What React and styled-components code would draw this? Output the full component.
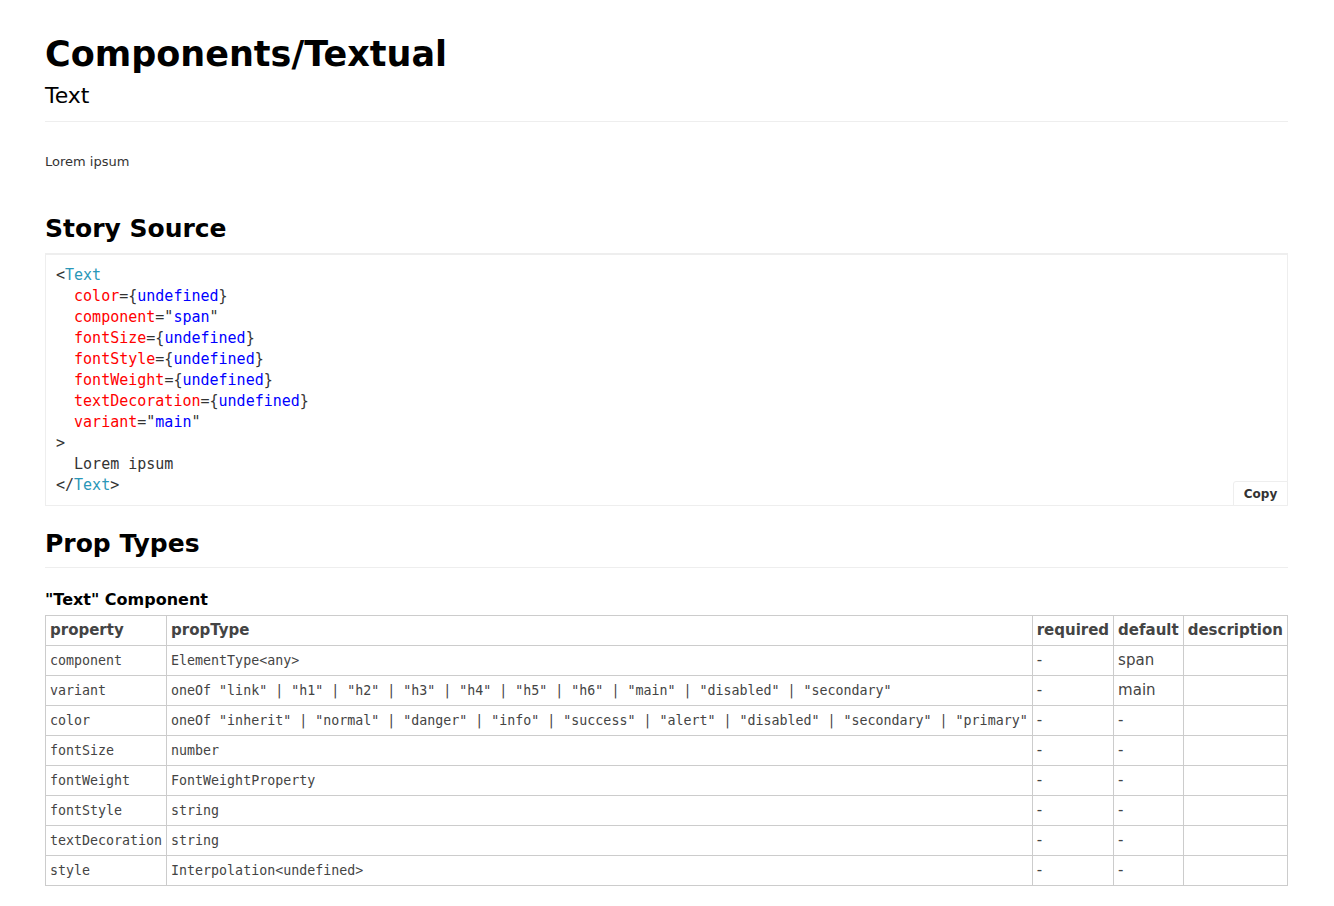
import React from 'react';
import styled, { createGlobalStyle } from 'styled-components';

const GlobalStyle = createGlobalStyle`
    html, body {
        margin: 0;
        padding: 0;
        background: #fff;
    }
    body {
        font-family: "DejaVu Sans", "Noto Sans", sans-serif;
        color: #333;
    }
`;

// one line of the story source, split into coloured tokens
const SOURCE = [
    [['p', '<'], ['tag', 'Text']],
    [['p', '  '], ['attr', 'color'], ['p', '={'], ['val', 'undefined'], ['p', '}']],
    [['p', '  '], ['attr', 'component'], ['p', '="'], ['val', 'span'], ['p', '"']],
    [['p', '  '], ['attr', 'fontSize'], ['p', '={'], ['val', 'undefined'], ['p', '}']],
    [['p', '  '], ['attr', 'fontStyle'], ['p', '={'], ['val', 'undefined'], ['p', '}']],
    [['p', '  '], ['attr', 'fontWeight'], ['p', '={'], ['val', 'undefined'], ['p', '}']],
    [['p', '  '], ['attr', 'textDecoration'], ['p', '={'], ['val', 'undefined'], ['p', '}']],
    [['p', '  '], ['attr', 'variant'], ['p', '="'], ['val', 'main'], ['p', '"']],
    [['p', '>']],
    [['p', '  Lorem ipsum']],
    [['p', '</'], ['tag', 'Text'], ['p', '>']],
];

const PROPS = [
    { name: 'component', type: 'ElementType<any>', def: 'span' },
    { name: 'variant', type: 'oneOf "link" | "h1" | "h2" | "h3" | "h4" | "h5" | "h6" | "main" | "disabled" | "secondary"', def: 'main' },
    { name: 'color', type: 'oneOf "inherit" | "normal" | "danger" | "info" | "success" | "alert" | "disabled" | "secondary" | "primary"', def: '-' },
    { name: 'fontSize', type: 'number', def: '-' },
    { name: 'fontWeight', type: 'FontWeightProperty', def: '-' },
    { name: 'fontStyle', type: 'string', def: '-' },
    { name: 'textDecoration', type: 'string', def: '-' },
    { name: 'style', type: 'Interpolation<undefined>', def: '-' },
];

export default function App() {
    return (
        <Page>
            <GlobalStyle />
            <Header>
                <Title>Components/Textual</Title>
                <Subtitle>Text</Subtitle>
            </Header>
            <Story>Lorem ipsum</Story>

            <SectionTitle>Story Source</SectionTitle>
            <Source>
                {SOURCE.map((line, i) => (
                    <Line key={i}>
                        {line.map(([kind, text], j) => (
                            <Token key={j} $kind={kind}>{text}</Token>
                        ))}
                    </Line>
                ))}
                <CopyButton>Copy</CopyButton>
            </Source>

            <SectionTitle $spaced>Prop Types</SectionTitle>
            <ComponentName>"Text" Component</ComponentName>
            <PropTable>
                <thead>
                    <tr>
                        <Th>property</Th>
                        <Th>propType</Th>
                        <Th>required</Th>
                        <Th>default</Th>
                        <Th>description</Th>
                    </tr>
                </thead>
                <tbody>
                    {PROPS.map(p => (
                        <tr key={p.name}>
                            <Td $mono>{p.name}</Td>
                            <Td $mono>{p.type}</Td>
                            <Td>-</Td>
                            <Td>{p.def}</Td>
                            <Td />
                        </tr>
                    ))}
                </tbody>
            </PropTable>
        </Page>
    );
}

const TOKEN_COLORS = {
    p: '#333',
    tag: '#2a97b8',
    attr: '#f00',
    val: '#00f',
};

const Page = styled.div`
    padding: 34px 46px 40px 45px;
`;
const Header = styled.div`
    display: flex;
    flex-direction: column;
    border-bottom: 1px solid #eee;
    padding-bottom: 13px;
`;
const Title = styled.h1`
    margin: 0;
    font-size: 35px;
    font-weight: bold;
    color: #000;
    line-height: 41px;
`;
const Subtitle = styled.h2`
    margin: 8px 0 0;
    font-size: 22px;
    font-weight: normal;
    color: #000;
    line-height: 25px;
`;
const Story = styled.div`
    margin-top: 32px;
    font-size: 13px;
    line-height: 15px;
    color: #333;
`;
const SectionTitle = styled.h1`
    margin: ${p => (p.$spaced ? '23px' : '45px')} 0 0;
    padding-bottom: ${p => (p.$spaced ? '9px' : '10px')};
    font-size: 25px;
    font-weight: bold;
    line-height: 29px;
    color: #000;
    border-bottom: 1px solid #eee;
`;
const Source = styled.div`
    position: relative;
    border: 1px solid #eee;
    padding: 10px 10px 9px;
    font-family: "DejaVu Sans Mono", "Liberation Mono", monospace;
    font-size: 15px;
    line-height: 21px;
`;
const Line = styled.div`
    white-space: pre;
`;
const Token = styled.span`
    color: ${p => TOKEN_COLORS[p.$kind]};
`;
const CopyButton = styled.button`
    position: absolute;
    right: -1px;
    bottom: -1px;
    width: 55px;
    height: 25px;
    padding: 0;
    border: 1px solid #eee;
    border-top-left-radius: 3px;
    background: #fff;
    font-family: "DejaVu Sans", sans-serif;
    font-size: 12px;
    font-weight: bold;
    color: #333;
`;
const ComponentName = styled.h2`
    margin: 22px 0 6px;
    font-size: 16px;
    font-weight: bold;
    line-height: 19px;
    color: #000;
`;
const PropTable = styled.table`
    width: 100%;
    border-collapse: collapse;
    color: #444;
`;
const Th = styled.th`
    border: 1px solid #ccc;
    padding: 0 4px;
    line-height: 29px;
    font-size: 15px;
    font-weight: bold;
    text-align: left;
    white-space: nowrap;
`;
const Td = styled.td`
    border: 1px solid #ccc;
    padding: 0 4px;
    line-height: 29px;
    white-space: nowrap;
    font-family: ${p => (p.$mono ? '"DejaVu Sans Mono", "Liberation Mono", monospace' : '"DejaVu Sans", sans-serif')};
    font-size: ${p => (p.$mono ? '13.3px' : '15px')};
`;
